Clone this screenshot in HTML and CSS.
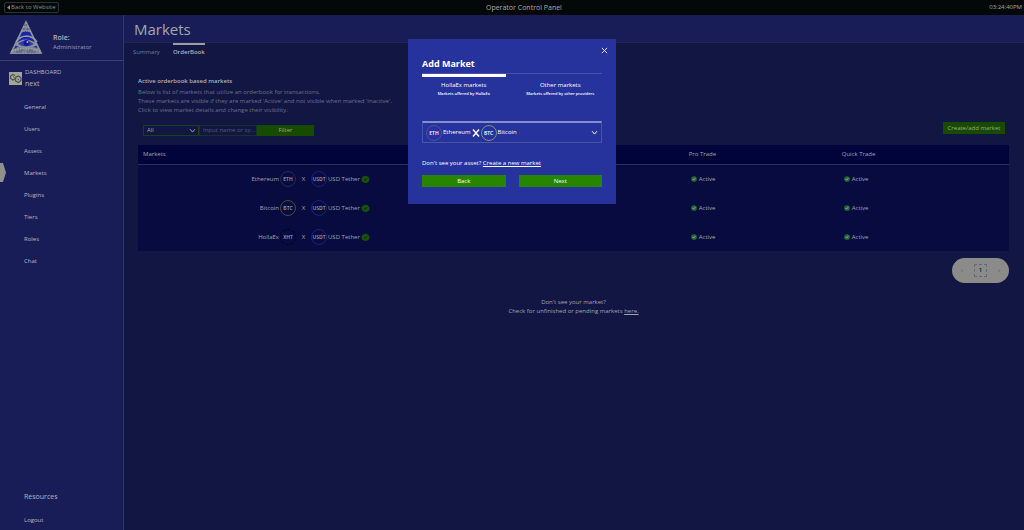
FILE: index.html
```html
<!DOCTYPE html>
<html lang="en">
<head>
<meta charset="utf-8">
<title>Operator Control Panel</title>
<link rel="stylesheet" href="styles.css">
</head>
<body>
<svg class="defs" aria-hidden="true">
  <symbol id="chevron" viewBox="0 0 8 8"><path d="M1.2 2.5 4 5.8 6.8 2.5" fill="none" stroke="currentColor" stroke-width="1.1"/></symbol>
  <symbol id="cross" viewBox="0 0 8 8"><path d="M1 1 7 7M7 1 1 7" fill="none" stroke="currentColor"/></symbol>
  <symbol id="cross-bold" viewBox="0 0 8 8"><path d="M1 .5 7 7.500M7 .5 1 7.500" fill="none" stroke="currentColor" stroke-width="1.400"/></symbol>
  <symbol id="check" viewBox="0 0 8 8"><circle cx="4" cy="4" r="3.8" fill="#216b2c"/><path d="M2.2 4.1 3.5 5.4 5.8 2.7" fill="none" stroke="#a5aaa9" stroke-width="1.2"/></symbol>
  <symbol id="verified" viewBox="0 0 10 10"><path d="M5 .5 6.3 1.4 7.9 1.3 8.4 2.9 9.6 4 9.1 5.5 9.2 7.1 7.7 7.7 6.6 9 5 8.5 3.4 9 2.4 7.7.8 7.1.9 5.5.4 4 1.6 2.9 2.1 1.3 3.7 1.4Z" fill="#175300"/><path d="M3.3 5 4.5 6.1 6.6 3.7" fill="none" stroke="#07132b" stroke-width=".8"/></symbol>
</svg>
<div class="page">
  <header class="topbar">
    <a class="back" href="#"><svg class="back-arrow" viewBox="0 0 4 6"><path d="M4 0V6L0 3Z" fill="currentColor"/></svg>Back to Website</a>
    <span class="topbar-title">Operator Control Panel</span>
    <time class="clock">03:24:40PM</time>
  </header>
  <div class="body">
    <aside class="sidebar">
      <div class="role">
        <svg class="logo" viewBox="0 0 34 36" aria-hidden="true">
          <path d="M17 0 33.500 34H.5Z" fill="#777c8f"/>
          <path d="M13 12.500 17 11 21 12.500 28.500 28 22 26H10L5 29Z" fill="#1724a4"/>
          <path d="M7 22Q11 16 18 16Q25 17 28 22" fill="none" stroke="#8f95aa" stroke-width="1.600"/>
          <path d="M5.500 25Q10 19.500 17 19.500Q24 20 29 25Q17 31 5.500 25Z" fill="#8f949f"/>
          <path d="M9 24Q12 20.500 17 20.500Q22 21 25 24Q17 29 9 24Z" fill="#3540a8"/>
          <circle cx="17.500" cy="23" r="3" fill="#0f1a96"/>
          <circle cx="18.500" cy="22" r="1" fill="#b4b9c4"/>
          <path d="M3 31Q17 26 31 31" fill="none" stroke="#9a9ca0" stroke-width="2" stroke-dasharray="2 .7"/>
          <path d="M17 2 2 33H32L17 2M14 7H20M12 11H22" fill="none" stroke="#a5a5a3" stroke-width="1" stroke-dasharray="1.500 .8"/>
          <path d="M15 5H18M14 9H16M18 9H21M7 32H13M18 32H27M10 30H15M20 30H24" stroke="#3b4486" stroke-width=".8" stroke-dasharray="1.500 .7"/>
        </svg>
        <div class="role-text"><div class="role-title">Role:</div><div class="role-name">Administrator</div></div>
      </div>
      <div class="dashboard">
        <svg class="dash-icon" viewBox="0 0 13 13" aria-hidden="true"><rect width="13" height="13" fill="#a3a49a"/><path d="M6 3.500 4 2.500 1.500 4V6.500L4 8 6.500 6.500 7 5 9.500 4 12 6V8.500L9.500 10.500 6.500 9V7.500" fill="none" stroke="#4b534f" stroke-width="1.200"/><path d="M4 4.500 5.500 5.500M8.500 7 10 8" stroke="#4b534f"/></svg>
        <div><div class="dash-label">DASHBOARD</div><div class="dash-name">next</div></div>
      </div>
      <nav class="menu">
        <a href="#">General</a><a href="#">Users</a><a href="#">Assets</a><a href="#" class="current"><svg class="marker" viewBox="0 0 6 20"><path d="M0 0H3L6 9.500 3 19H0Z" fill="#8f918c"/></svg>Markets</a><a href="#">Plugins</a><a href="#">Tiers</a><a href="#">Roles</a><a href="#">Chat</a>
      </nav>
      <div class="resources"><div class="resources-title">Resources</div><a href="#">Logout</a></div>
    </aside>
    <main class="main">
      <div class="heading"><h1>Markets</h1></div>
      <nav class="tabs"><a href="#">Summary</a><a href="#" class="active">OrderBook</a></nav>
      <section class="content">
        <h2>Active orderbook based markets</h2>
        <p class="intro">Below is list of markets that utilize an orderbook for transactions.<br>These markets are visible if they are marked 'Active' and not visible when marked 'Inactive'.<br>Click to view market details and change their visibility.</p>
        <div class="tools">
          <form class="filter">
            <div class="select-wrap"><select aria-label="Market type"><option>All</option></select><svg class="chev"><use href="#chevron"/></svg></div>
            <input type="text" aria-label="Market name" placeholder="Input name or sy...">
            <button type="button">Filter</button>
          </form>
          <button type="button" class="create">Create/add market</button>
        </div>
        <table class="markets">
          <thead><tr><th class="col-market">Markets</th><th class="col-pro">Pro Trade</th><th>Quick Trade</th></tr></thead>
          <tbody>
            <tr><td><div class="pair"><span class="base">Ethereum</span><span class="coin eth">ETH</span><span class="by">X</span><span class="coin usdt">USDT</span><span>USD Tether</span><svg class="verified"><use href="#verified"/></svg></div></td><td><span class="status"><svg class="tick"><use href="#check"/></svg>Active</span></td><td><span class="status"><svg class="tick"><use href="#check"/></svg>Active</span></td></tr>
            <tr><td><div class="pair"><span class="base">Bitcoin</span><span class="coin btc">BTC</span><span class="by">X</span><span class="coin usdt">USDT</span><span>USD Tether</span><svg class="verified"><use href="#verified"/></svg></div></td><td><span class="status"><svg class="tick"><use href="#check"/></svg>Active</span></td><td><span class="status"><svg class="tick"><use href="#check"/></svg>Active</span></td></tr>
            <tr><td><div class="pair"><span class="base">HollaEx</span><span class="coin xht">XHT</span><span class="by">X</span><span class="coin usdt">USDT</span><span>USD Tether</span><svg class="verified"><use href="#verified"/></svg></div></td><td><span class="status"><svg class="tick"><use href="#check"/></svg>Active</span></td><td><span class="status"><svg class="tick"><use href="#check"/></svg>Active</span></td></tr>
          </tbody>
        </table>
        <nav class="pager" aria-label="Pages"><button type="button" aria-label="Previous">‹</button><button type="button" class="page-number">1</button><button type="button" aria-label="Next page">›</button></nav>
        <p class="missing">Don't see your market?<br>Check for unfinished or pending markets <a href="#">here.</a></p>
      </section>
    </main>
  </div>
  <div class="overlay">
    <div class="modal" role="dialog" aria-labelledby="modal-title">
      <button type="button" class="close" aria-label="Close"><svg class="close-icon"><use href="#cross"/></svg></button>
      <h2 id="modal-title">Add Market</h2>
      <div class="modal-tabs">
        <button type="button" class="selected"><span>HollaEx markets</span><small>Markets offered by HollaEx</small></button>
        <button type="button"><span>Other markets</span><small>Markets offered by other providers</small></button>
      </div>
      <button type="button" class="picker" aria-haspopup="listbox"><span class="coin eth">ETH</span><span>Ethereum</span><svg class="times"><use href="#cross-bold"/></svg><span class="coin btc">BTC</span><span>Bitcoin</span><svg class="chev"><use href="#chevron"/></svg></button>
      <p class="ask">Don't see your asset? <a href="#">Create a new market</a></p>
      <div class="actions"><button type="button">Back</button><button type="button">Next</button></div>
    </div>
  </div>
</div>
</body>
</html>
```

FILE: styles.css
```css
* { box-sizing: border-box; }
body { margin: 0; background: #121642; color: #a0a3b2; font: 6px/9px "Open Sans", "Noto Sans", sans-serif; }
h1, h2, p { margin: 0; font-weight: 400; }
a { color: inherit; text-decoration: none; }
button, input, select { margin: 0; padding: 0; border: 0; border-radius: 0; background: none; color: inherit; font: inherit; }
.defs { display: none; }
.page { min-height: 100vh; display: flex; flex-direction: column; position: relative; }
.topbar { height: 15px; padding: 0 2px 0 4px; background: #050808; display: flex; justify-content: space-between; align-items: center; color: #a8aba5; }
.back { display: flex; align-items: center; gap: 1px; height: 11px; padding: 0 2px; border: 1px solid #25372f; border-radius: 2px; color: #8b8f8a; }
.back-arrow { width: 3px; height: 5px; }
.topbar-title { font-size: 7px; }
.body { flex: 1; display: flex; }
.sidebar { width: 124px; flex: none; display: flex; flex-direction: column; background: #181d58; border-right: 1px solid #303668; color: #b5b7bd; }
.role { height: 46px; padding: 4px 9px; display: flex; align-items: center; gap: 10px; border-bottom: 1px solid #383d70; }
.role-text { padding-top: 10px; }
.logo { width: 34px; height: 36px; }
.role-title { font-size: 7px; font-weight: 600; line-height: 10px; }
.role-name { color: #9b9eaa; }
.dashboard { display: flex; align-items: center; gap: 3px; padding: 6px 9px 0; }
.dash-icon { width: 13px; height: 13px; }
.dash-label { line-height: 11px; }
.dash-name { font-size: 7px; line-height: 12px; }
.menu { display: flex; flex-direction: column; padding-top: 6px; font-weight: 500; }
.menu a { height: 22px; padding-left: 24px; display: flex; align-items: center; position: relative; }
.marker { position: absolute; left: 0; top: 1px; width: 6px; height: 20px; }
.resources { margin-top: auto; padding: 0 0 5px 24px; font-weight: 500; }
.resources-title { font-size: 7px; line-height: 12px; margin-bottom: 13px; }
.main { flex: 1; min-width: 0; }
.heading { height: 28px; padding-left: 10px; background: #181d58; border-bottom: 1px solid #202553; }
h1 { font-size: 15px; line-height: 28px; color: #a5a7ad; }
.tabs { display: flex; gap: 13px; padding-left: 9px; color: #777b93; }
.tabs a { padding-top: 3px; border-top: 2px solid transparent; }
.tabs .active { border-color: #9c9ea3; color: #b0b2bb; font-weight: 600; }
.content { padding: 19px 15px 0 14px; }
.content h2 { font-size: 6px; line-height: 10px; font-weight: 600; color: #b0b2bb; }
.intro { margin-top: 2px; color: #6d718a; }
.tools { display: flex; align-items: center; justify-content: space-between; margin: 5px 4px 9px 5px; }
.filter { display: flex; height: 11px; margin-top: 5px; }
.select-wrap { position: relative; width: 56px; border: 1px solid #174116; }
select { appearance: none; width: 100%; height: 100%; padding-left: 3px; }
.chev { width: 7px; height: 7px; }
.select-wrap .chev { position: absolute; right: 2px; top: 1px; pointer-events: none; }
.filter input { width: 58px; padding-left: 3px; border: 1px solid #173323; }
.filter input::placeholder { color: #565b76; opacity: 1; }
.filter button { width: 57px; }
.filter button, .create { background: #174b00; color: #9ca698; }
.create { height: 12px; width: 62px; }
.markets { width: 100%; table-layout: fixed; border-collapse: collapse; background: #070b40; }
.markets th { height: 19px; padding: 1px 0 0 2px; background: #00043a; border-bottom: 1px solid #292e58; text-align: left; font-weight: 400; }
.markets .col-market { width: 63%; padding-left: 5px; }
.markets .col-pro { width: 153px; }
.markets td { height: 29px; padding: 1px 0 0; }
.pair { display: grid; grid-template-columns: 141px 16px 13px 16px auto 1fr; column-gap: 1px; align-items: center; }
.base { text-align: right; }
.by { text-align: center; }
.coin { flex: none; display: grid; place-items: center; width: 16px; height: 16px; border: 1px solid; border-radius: 50%; }
.coin { font-size: 5px; line-height: 6px; font-weight: 600; }
.eth { border-color: #242a5a; }
.btc { border-color: #42562f; }
.usdt { border-color: #1b2080; }
.xht { border-color: #03040f; border-style: dashed; }
.coin::first-line { color: #b5b8c4; }
.verified { width: 9px; height: 9px; }
.status { display: flex; align-items: center; gap: 2px; padding-left: 4px; }
.tick { width: 6px; height: 6px; }
.pager { width: 57px; height: 25px; margin: 7px 0 0 auto; padding: 0 9px; display: flex; align-items: center; justify-content: space-between; background: #8b8c89; border-radius: 13px; color: #3d4242; }
.pager .page-number { width: 13px; height: 13px; border: 1px dashed #62677c; color: #10152b; font-weight: 600; }
.missing { margin-top: 15px; text-align: center; }
.missing a, .ask a { text-decoration: underline; }
.overlay { position: absolute; inset: 39px 0 auto; display: flex; justify-content: center; pointer-events: none; }
.modal { width: 208px; padding: 18px 14px 17px; background: #27339c; color: #fff; position: relative; pointer-events: auto; }
.close { position: absolute; top: 8px; right: 8px; width: 7px; height: 7px; }
.close-icon { display: block; width: 7px; height: 7px; }
.times { width: 8px; height: 8px; }
.modal h2 { font-size: 9px; line-height: 14px; font-weight: 700; }
.modal-tabs { display: grid; grid-template-columns: 1fr 1fr; column-gap: 13px; margin-top: 2px; border-top: 1px solid #4752a4; }
.modal-tabs button { padding-top: 7px; }
.modal-tabs .selected { border-top: 3px solid #fff; padding-top: 4px; }
.modal-tabs span, .modal-tabs small { display: block; }
.modal-tabs small { font-size: 4px; line-height: 7px; font-weight: 600; white-space: nowrap; }
.picker { display: flex; align-items: center; width: 100%; height: 22px; margin-top: 24px; padding: 0 3px; gap: 1px; border: 1px solid #4b55a5; border-top: 2px solid #858dcc; }
.picker .coin::first-line { color: #fff; }
.picker .eth { border-color: #4651a5; }
.picker .btc { border-color: #8a8778; }
.picker .chev { margin-left: auto; }
.ask { margin-top: 16px; }
.actions { display: grid; grid-template-columns: 1fr 1fr; gap: 13px; margin-top: 7px; }
.actions button { height: 12px; background: #288500; }
```
